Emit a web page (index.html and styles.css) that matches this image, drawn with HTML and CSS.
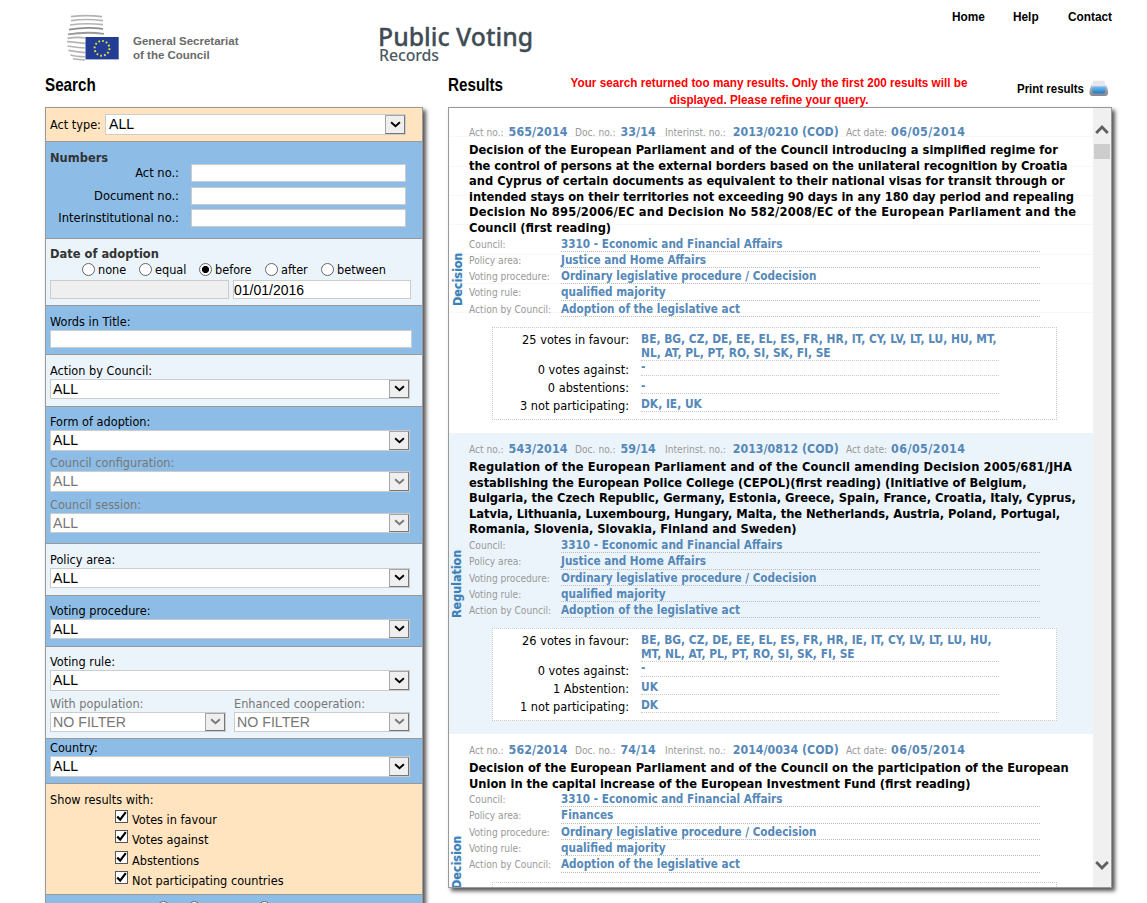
FILE: index.html
```html
<!DOCTYPE html>
<html lang="en">
<head>
<meta charset="utf-8">
<title>Public Voting Records</title>
<link rel="stylesheet" href="styles.css">
</head>
<body>
<svg class="defs" width="0" height="0">
  <symbol id="chev" viewBox="0 0 10 8"><path d="M0.6 1.2 L5 5.2 L9.4 1.2" fill="none" stroke="currentColor" stroke-width="1.9"/></symbol>
  <symbol id="tick" viewBox="0 0 11 11"><path d="M1.2 5.4 L4.2 8.6 L9.8 1.2" fill="none" stroke="#000" stroke-width="2.2"/></symbol>
</svg>

<header class="top">
  <div class="brand">
    <svg class="logo" width="54" height="48" viewBox="0 0 54 48">
      <g fill="none" stroke="#b4b4b4" stroke-width="1.6">
        <path d="M5 2.6 Q20 .6 36 2.6"/>
        <path d="M5 6.6 Q20 4.4 37 6.6"/>
        <path d="M4 11 Q20 8.6 37 10.6"/>
        <path d="M3 15.6 Q20 12.6 37 14.8" stroke="#8e8e8e" stroke-width="1.8"/>
        <path d="M2 20.4 Q20 17.4 38 19.8" stroke="#999" stroke-width="1.8"/>
        <path d="M1.5 24.4 Q10 22.6 19 24"/>
        <path d="M1 27.6 Q10 28.4 19 29.4"/>
        <path d="M1.6 32 Q10 33.6 19 34"/>
        <path d="M2.4 36.4 Q10 38 19 38.6"/>
        <path d="M4.4 41 Q10 42.6 19 42.8"/>
        <path d="M7 44.8 Q12 45.8 19 46"/>
      </g>
      <rect x="19.5" y="23" width="33.2" height="22.4" fill="#233d94"/>
      <circle cx="36" cy="34.3" r="7.4" fill="none" stroke="#e3df3e" stroke-width="2" stroke-dasharray="1.7 2.17"/>
    </svg>
    <div class="gsc">General Secretariat<br>of the Council</div>
  </div>
  <div class="title"><div class="t1">Public Voting</div><div class="t2">Records</div></div>
  <nav class="nav"><a>Home</a><a>Help</a><a>Contact</a></nav>
</header>

<div class="heads">
  <h2 class="h-search">Search</h2>
  <h2 class="h-results">Results</h2>
  <div class="warn">Your search returned too many results. Only the first 200 results will be<br>displayed. Please refine your query.</div>
  <div class="print"><span class="ptext">Print results</span>
    <svg width="20" height="17" viewBox="0 0 20 17">
      <defs>
        <linearGradient id="pb" x1="0" y1="0" x2="0" y2="1"><stop offset="0" stop-color="#7cc4ef"/><stop offset="1" stop-color="#1b78c6"/></linearGradient>
        <linearGradient id="pg" x1="0" y1="0" x2="0" y2="1"><stop offset="0" stop-color="#c4c4c8"/><stop offset="1" stop-color="#85858b"/></linearGradient>
      </defs>
      <path d="M4 .8 H15.4 L16.8 7 H2.8 Z" fill="#e6e6ec"/>
      <path d="M3 4.2 Q.4 8 .4 12 Q.4 16 3.4 16 H16 Q19.2 16 19.2 12 Q19.2 8 16.6 4.2 L16.8 8 H3 Z" fill="url(#pg)"/>
      <path d="M3.2 6.2 H16.6 V11 Q16.4 13.6 14 13.6 H6 Q3.4 13.6 3.2 11 Z" fill="url(#pb)"/>
    </svg>
  </div>
</div>

<main class="cols">
<form class="search">
  <section class="sec peach s-type"><span class="lab">Act type:</span><div class="sel h21"><span>ALL</span><i class="btn"><svg><use href="#chev"/></svg></i></div></section>

  <section class="sec blue s-num">
    <h3>Numbers</h3>
    <div class="nrow"><label>Act no.:</label><input class="in"></div>
    <div class="nrow"><label>Document no.:</label><input class="in"></div>
    <div class="nrow"><label>Interinstitutional no.:</label><input class="in"></div>
  </section>

  <section class="sec pale s-date">
    <h3>Date of adoption</h3>
    <div class="radios">
      <label><i class="rad"></i>none</label><label><i class="rad"></i>equal</label><label><i class="rad on"></i>before</label><label><i class="rad"></i>after</label><label><i class="rad"></i>between</label>
    </div>
    <div class="dates"><input class="in off" disabled><input class="in" value="01/01/2016"></div>
  </section>

  <section class="sec blue s-words"><div class="lab">Words in Title:</div><input class="in"></section>

  <section class="sec pale s-action"><div class="lab">Action by Council:</div><div class="sel"><span>ALL</span><i class="btn"><svg><use href="#chev"/></svg></i></div></section>

  <section class="sec blue s-form">
    <div class="lab">Form of adoption:</div><div class="sel h21"><span>ALL</span><i class="btn"><svg><use href="#chev"/></svg></i></div>
    <div class="lab dim gap4">Council configuration:</div><div class="sel h21 dim"><span>ALL</span><i class="btn"><svg><use href="#chev"/></svg></i></div>
    <div class="lab dim gap5">Council session:</div><div class="sel dim"><span>ALL</span><i class="btn"><svg><use href="#chev"/></svg></i></div>
  </section>

  <section class="sec pale s-policy"><div class="lab">Policy area:</div><div class="sel"><span>ALL</span><i class="btn"><svg><use href="#chev"/></svg></i></div></section>

  <section class="sec blue s-proc"><div class="lab">Voting procedure:</div><div class="sel"><span>ALL</span><i class="btn"><svg><use href="#chev"/></svg></i></div></section>

  <section class="sec pale s-rule">
    <div class="lab">Voting rule:</div><div class="sel h21"><span>ALL</span><i class="btn"><svg><use href="#chev"/></svg></i></div>
    <div class="pair">
      <div><div class="lab dim">With population:</div><div class="sel dim"><span>NO FILTER</span><i class="btn"><svg><use href="#chev"/></svg></i></div></div>
      <div><div class="lab dim">Enhanced cooperation:</div><div class="sel dim"><span>NO FILTER</span><i class="btn"><svg><use href="#chev"/></svg></i></div></div>
    </div>
  </section>

  <section class="sec blue s-country"><div class="lab">Country:</div><div class="sel h21"><span>ALL</span><i class="btn"><svg><use href="#chev"/></svg></i></div></section>

  <section class="sec peach s-show">
    <div class="lab">Show results with:</div>
    <div class="checks">
      <label><i class="chk"><svg><use href="#tick"/></svg></i>Votes in favour</label>
      <label><i class="chk"><svg><use href="#tick"/></svg></i>Votes against</label>
      <label><i class="chk"><svg><use href="#tick"/></svg></i>Abstentions</label>
      <label><i class="chk"><svg><use href="#tick"/></svg></i>Not participating countries</label>
    </div>
  </section>

  <section class="sec blue s-sort"><i class="rad"></i><i class="rad"></i><i class="rad"></i></section>
</form>

<div class="results">
  <div class="list">
    <article class="item first">
      <div class="side">Decision</div>
      <div class="body">
        <div class="act"><span class="a1">Act no.: <b>565/2014</b></span><span class="a2">Doc. no.: <b>33/14</b></span><span class="a3">Interinst. no.: <b>2013/0210 (COD)</b></span><span class="a4">Act date: <b>06/05/2014</b></span></div>
        <div class="name">Decision of the European Parliament and of the Council introducing a simplified regime for<br><span class="tight">the control of persons at the external borders based on the unilateral recognition by Croatia</span><br>and Cyprus of certain documents as equivalent to their national visas for transit through or<br><span class="tight">intended stays on their territories not exceeding 90 days in any 180 day period and repealing</span><br><span class="wide">Decision No 895/2006/EC and Decision No 582/2008/EC of the European Parliament and the</span><br>Council (first reading)</div>
        <div class="row"><span>Council:</span><b>3310 - Economic and Financial Affairs</b></div>
        <div class="row"><span>Policy area:</span><b>Justice and Home Affairs</b></div>
        <div class="row"><span>Voting procedure:</span><b>Ordinary legislative procedure / Codecision</b></div>
        <div class="row"><span>Voting rule:</span><b>qualified majority</b></div>
        <div class="row"><span>Action by Council:</span><b>Adoption of the legislative act</b></div>
        <div class="votes">
          <div class="v v1"><span>25 votes in favour:</span><b>BE, BG, CZ, DE, EE, EL, ES, FR, HR, IT, CY, LV, LT, LU, HU, MT,<br>NL, AT, PL, PT, RO, SI, SK, FI, SE</b></div>
          <div class="v v2"><span>0 votes against:</span><b>-</b></div>
          <div class="v"><span>0 abstentions:</span><b>-</b></div>
          <div class="v"><span>3 not participating:</span><b>DK, IE, UK</b></div>
        </div>
      </div>
    </article>

    <article class="item second">
      <div class="side">Regulation</div>
      <div class="body">
        <div class="act"><span class="a1">Act no.: <b>543/2014</b></span><span class="a2">Doc. no.: <b>59/14</b></span><span class="a3">Interinst. no.: <b>2013/0812 (COD)</b></span><span class="a4">Act date: <b>06/05/2014</b></span></div>
        <div class="name"><span class="loose">Regulation of the European Parliament and of the Council amending Decision 2005/681/JHA</span><br>establishing the European Police College (CEPOL)(first reading) (Initiative of Belgium,<br>Bulgaria, the Czech Republic, Germany, Estonia, Greece, Spain, France, Croatia, Italy, Cyprus,<br><span class="tight">Latvia, Lithuania, Luxembourg, Hungary, Malta, the Netherlands, Austria, Poland, Portugal,</span><br>Romania, Slovenia, Slovakia, Finland and Sweden)</div>
        <div class="row"><span>Council:</span><b>3310 - Economic and Financial Affairs</b></div>
        <div class="row"><span>Policy area:</span><b>Justice and Home Affairs</b></div>
        <div class="row"><span>Voting procedure:</span><b>Ordinary legislative procedure / Codecision</b></div>
        <div class="row"><span>Voting rule:</span><b>qualified majority</b></div>
        <div class="row"><span>Action by Council:</span><b>Adoption of the legislative act</b></div>
        <div class="votes">
          <div class="v v1"><span>26 votes in favour:</span><b>BE, BG, CZ, DE, EE, EL, ES, FR, HR, IE, IT, CY, LV, LT, LU, HU,<br>MT, NL, AT, PL, PT, RO, SI, SK, FI, SE</b></div>
          <div class="v v2"><span>0 votes against:</span><b>-</b></div>
          <div class="v"><span>1 Abstention:</span><b>UK</b></div>
          <div class="v"><span>1 not participating:</span><b>DK</b></div>
        </div>
      </div>
    </article>

    <article class="item third">
      <div class="side">Decision</div>
      <div class="body">
        <div class="act"><span class="a1">Act no.: <b>562/2014</b></span><span class="a2">Doc. no.: <b>74/14</b></span><span class="a3">Interinst. no.: <b>2014/0034 (COD)</b></span><span class="a4">Act date: <b>06/05/2014</b></span></div>
        <div class="name">Decision of the European Parliament and of the Council on the participation of the European<br>Union in the capital increase of the European Investment Fund (first reading)</div>
        <div class="row"><span>Council:</span><b>3310 - Economic and Financial Affairs</b></div>
        <div class="row"><span>Policy area:</span><b>Finances</b></div>
        <div class="row"><span>Voting procedure:</span><b>Ordinary legislative procedure / Codecision</b></div>
        <div class="row"><span>Voting rule:</span><b>qualified majority</b></div>
        <div class="row"><span>Action by Council:</span><b>Adoption of the legislative act</b></div>
        <div class="votes"></div>
      </div>
    </article>
  </div>
  <div class="bar">
    <svg class="up" width="14" height="12" viewBox="0 0 14 12"><path d="M1.2 10 L7 4 L12.8 10" fill="none" stroke="#606060" stroke-width="2.8"/></svg>
    <div class="thumb"></div>
    <svg class="down" width="14" height="12" viewBox="0 0 14 12"><path d="M1.2 2 L7 8 L12.8 2" fill="none" stroke="#606060" stroke-width="2.8"/></svg>
  </div>
</div>
</main>
</body>
</html>
```
FILE: styles.css
```css
* { box-sizing: border-box; }
body { margin: 0; width: 1147px; height: 903px; overflow: hidden; background: #fff; color: #000;
  font: 12.6px/16px "DejaVu Sans Condensed", "DejaVu Sans", sans-serif; white-space: nowrap; }
h2, h3 { margin: 0; }
i { font-style: normal; }
.defs { display: block; height: 0; }

/* header */
.top { display: flex; height: 70px; }
.brand { display: flex; width: 378px; padding: 14px 0 0 66px; }
.gsc { margin: 20px 0 0 13px; font: bold 11.5px/14px "Liberation Sans", Arial, sans-serif; color: #6a6a6a; }
.title { width: 574px; padding-top: 23px; color: #3f4c55; font-family: "Noto Sans", sans-serif; font-weight: 500; }
.t1 { font-size: 24.8px; line-height: 26px; -webkit-text-stroke: .3px #3f4c55; }
.t2 { font-size: 15.9px; line-height: 16px; margin: -2px 0 0 1px; color: #4d5962; letter-spacing: -.1px; }
.nav { display: flex; padding-top: 9px; font: bold 13px/16px "Liberation Sans", Arial, sans-serif; }
.nav a { transform: scaleX(.91); transform-origin: 0 50%; width: 61px; }
.nav a:nth-child(2) { width: 55px; }
.nav a:nth-child(3) { width: 46px; }

.heads { display: flex; height: 37px; padding-left: 45px; font-family: "Liberation Sans", Arial, sans-serif; font-weight: bold; }
.heads h2 { font-size: 19px; line-height: 20px; padding-top: 5px; transform: scaleX(.8); transform-origin: 0 50%; }
.h-search { width: 403px; }
.h-results { width: 100px; }
.warn { width: 442px; padding-top: 4px; text-align: center; color: #f00; font-size: 13px; line-height: 17px; transform: scaleX(.901); }
.print { display: flex; margin-left: 27px; padding-top: 10px; font-size: 13px; line-height: 17px; }
.ptext { width: 72px; transform: scaleX(.883); transform-origin: 0 50%; }

.cols { display: flex; align-items: flex-start; padding-left: 45px; }

/* search form */
.search { width: 378px; height: 830px; border: 1px solid #999; box-shadow: 3px 3px 4px #555; }
.sec { padding-left: 4px; border-bottom: 1px solid #999; }
.peach { background: #ffe4bf; }
.blue { background: #8dbde6; }
.pale { background: #ecf4fb; }
.sec h3 { font-size: 12.76px; line-height: 14px; color: #333; }
.lab { height: 16px; }
.lab.dim { color: #777; }
.gap4 { margin-top: 4px; }
.gap5 { margin-top: 5px; }
.sel { display: flex; justify-content: space-between; width: 360px; height: 20px; padding: 0 0 0 2px; background: #fff; border: 1px solid #ccc;
  font: 14.1px/18px "Liberation Sans", Arial, sans-serif; }
.h21 { height: 21px; }
.btn { display: flex; align-items: center; justify-content: center; width: 20px; background: #efefef; border: 1px solid #a5a5a5; border-right-color: #777; border-bottom-color: #777; }
.btn svg { width: 11px; height: 8px; margin-left: 1px; }
.sel.dim { color: #777; }
.in { display: block; height: 18px; margin: 0; padding: 0; border: 1px solid #ccc; border-radius: 0; background: #fff; outline: 0;
  font: 14px/16px "Liberation Sans", Arial, sans-serif; color: #000; }
.in.off { background: #efefef; }

.s-type { display: flex; height: 34px; padding-top: 6px; }
.s-type .lab { width: 55px; line-height: 21px; }
.s-type .sel { width: 301px; padding-left: 3px; }
.s-num { height: 97px; padding-top: 9px; }
.s-num h3 { margin-bottom: -1px; }
.nrow { display: flex; height: 18px; margin-bottom: 5px; }
.nrow + .nrow + .nrow { margin-top: -1px; }
.nrow label { width: 129px; margin-right: 12px; text-align: right; line-height: 18px; font-size: 12.8px; }
.nrow .in { width: 215px; }
.s-date { height: 67px; padding-top: 8px; }
.s-date h3 { margin-bottom: -1px; }
.radios { display: flex; height: 20px; padding: 2px 0 0 32px; }
.radios label { display: flex; width: 57px; height: 16px; line-height: 16px; }
.radios label:nth-child(2) { width: 60px; }
.radios label:nth-child(3) { width: 66px; }
.radios label:nth-child(4) { width: 56px; }
.rad { display: block; width: 13px; height: 13px; margin: 1px 3px 0 0; border: 1px solid #666; border-radius: 50%; background: #fff; flex: none; }
.rad.on { background: radial-gradient(circle, #000 3.2px, #fff 3.9px); }
.dates { display: flex; gap: 4px; }
.dates .in { width: 179px; height: 19px; }
.dates .in + .in { width: 178px; }
.s-words { height: 49px; padding-top: 8px; }
.s-words .in { width: 362px; }
.s-action { height: 52px; padding-top: 8px; }
.s-form { height: 137px; padding-top: 7px; }
.s-policy { height: 52px; padding-top: 8px; }
.s-proc { height: 51px; padding-top: 7px; }
.s-rule { height: 92px; padding-top: 7px; }
.pair { display: flex; gap: 8px; margin-top: 5px; }
.pair .sel { width: 176px; font-size: 14.2px; }
.s-country { height: 45px; padding-top: 1px; }
.s-show { height: 111px; padding-top: 8px; }
.checks { padding: 2px 0 0 65px; }
.checks label { display: flex; height: 20.4px; line-height: 19px; }
.chk { display: flex; width: 13px; height: 13px; margin-right: 4px; background: #fff; border: 1px solid #555; }
.chk svg { width: 11px; height: 11px; }
.s-sort { display: flex; height: 40px; padding: 6px 0 0 111px; border: 0; }
.s-sort .rad { margin: 0 18px 0 0; }
.s-sort .rad + .rad { margin-right: 57px; }

/* results */
.results { display: flex; width: 664px; height: 781px; margin-left: 25px; overflow: hidden; border: 1px solid #999; background: #fff; box-shadow: 3px 3px 4px #555; }
.list { width: 644px; height: 779px; overflow: hidden; }
.item { display: flex; }
.first { height: 325px; padding-top: 8px;
  background: repeating-linear-gradient(#fff 0 28.3px, #f8f8f8 28.3px 29.3px) 0 0 / 100% 206px no-repeat; }
.second { height: 301px; background: #ecf4fb; }
.third { height: 301px; }
.side { width: 16px; margin-right: 4px; height: 190px; writing-mode: vertical-rl; transform: rotate(180deg); text-align: right; line-height: 16px;
  font-size: 12.4px; font-weight: bold; color: #3f7fb5; text-shadow: 1px 0 1px #c5e0f5; }
.first .side { margin-top: 137px; padding-right: 1px; }
.second .side { margin-top: 117px; }
.third .side { margin-top: 102px; }
.act { display: flex; height: 26px; padding-top: 8px; font-size: 10.15px; line-height: 16px; color: #999; }
.act b { font-size: 12.35px; color: #5588b8; margin-left: 2px; letter-spacing: .12px; }
.a1 { width: 106px; }
.a2 { width: 90px; }
.a3 { width: 181px; }
.act .a3 b { margin-left: 4px; font-size: 12.25px; letter-spacing: 0; }
.act .a4 b { margin-left: 1px; letter-spacing: .45px; }
.name { font-weight: bold; font-size: 12.77px; line-height: 15.6px; }
.tight { letter-spacing: -.038px; }
.loose { letter-spacing: .12px; }
.wide { letter-spacing: .2px; }
.row { display: flex; height: 16.3px; width: 571px; }
.row span { width: 92px; font-size: 10.15px; line-height: 17.6px; color: #999; }
.row b { flex: 1; font-size: 11.65px; line-height: 17.2px; color: #5588b8; border-bottom: 1px dotted #bbb; }
.votes { width: 565px; height: 93px; margin: 9.5px 0 0 23px; border: 1px dotted #c8c8c8; background: #fff; }
.v { display: flex; height: 18px; }
.v1 { height: 33px; }
.v2 { height: 15px; }
.v span { width: 136px; margin-right: 12px; text-align: right; line-height: 23px; font-size: 12.65px; }
.v2 span { line-height: 17px; }
.v b { width: 358px; font-size: 11.87px; line-height: 21px; color: #5588b8; border-bottom: 1px dotted #c8c8c8; }
.v1 b { line-height: 14px; padding-top: 4px; }
.v2 b { line-height: 12px; }

/* scrollbar */
.bar { display: flex; flex-direction: column; align-items: center; width: 18px; background: #f0f0f0; padding-top: 15px; }
.thumb { width: 16px; height: 15px; margin-top: 9px; background: #cdcdcd; }
.down { margin-top: 701px; }
```
